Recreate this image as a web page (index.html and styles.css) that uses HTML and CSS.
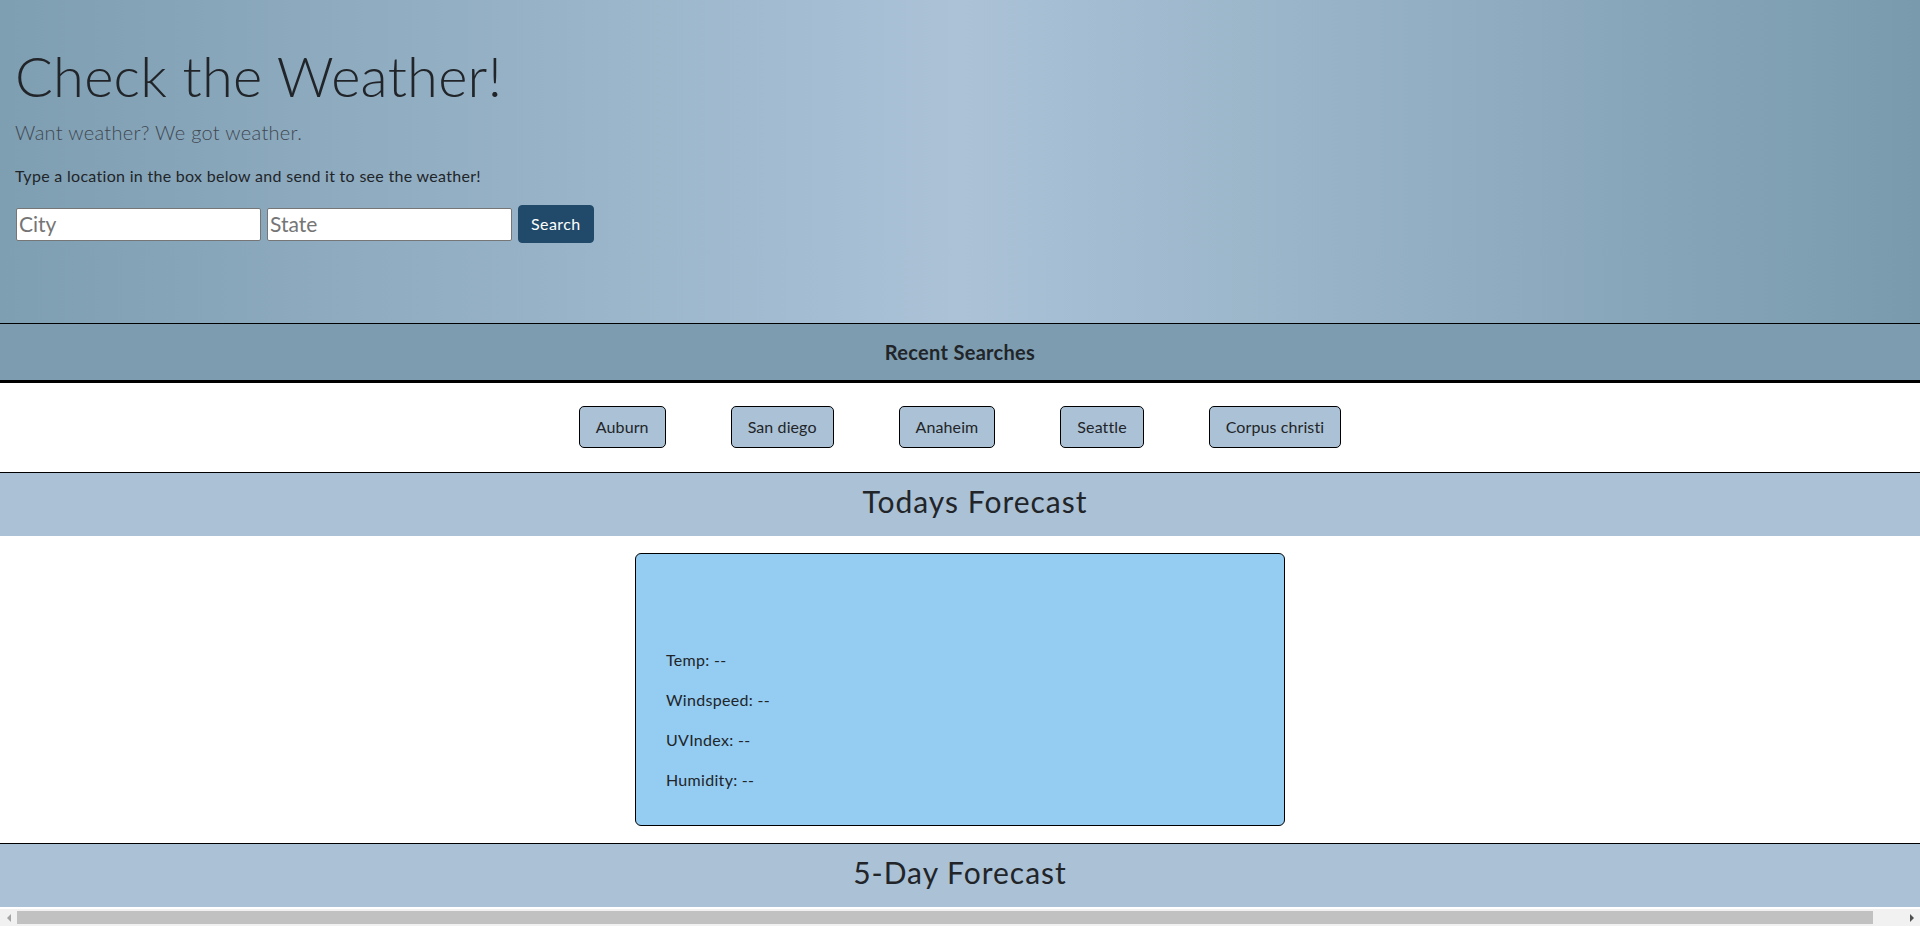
FILE: index.html
```html
<!DOCTYPE html>
<html lang="en">
<head>
<meta charset="utf-8">
<title>Check the Weather!</title>
<link rel="stylesheet" href="styles.css">
</head>
<body>
<header class="hero">
  <h1 class="hero-title">Check the Weather!</h1>
  <p class="hero-lead">Want weather? We got weather.</p>
  <p class="hero-text">Type a location in the box below and send it to see the weather!</p>
  <form class="search-form">
    <input class="search-input" type="text" placeholder="City">
    <input class="search-input" type="text" placeholder="State">
    <button class="search-btn" type="button">Search</button>
  </form>
</header>
<section class="recent">
  <h5 class="recent-title">Recent Searches</h5>
  <div class="recent-list">
    <button class="recent-btn" type="button">Auburn</button>
    <button class="recent-btn" type="button">San diego</button>
    <button class="recent-btn" type="button">Anaheim</button>
    <button class="recent-btn" type="button">Seattle</button>
    <button class="recent-btn" type="button">Corpus christi</button>
  </div>
</section>
<section class="today">
  <h3 class="section-bar section-bar-wide">Todays Forecast</h3>
  <div class="today-body">
    <div class="today-card">
      <p class="stat">Temp: --</p>
      <p class="stat">Windspeed: --</p>
      <p class="stat">UVIndex: --</p>
      <p class="stat">Humidity: --</p>
    </div>
  </div>
</section>
<section class="five">
  <h3 class="section-bar">5-Day Forecast</h3>
</section>
<div class="hscroll" aria-hidden="true">
  <span class="hscroll-arrow hscroll-left"></span>
  <span class="hscroll-track"><span class="hscroll-thumb"></span></span>
  <span class="hscroll-arrow hscroll-right"></span>
</div>
</body>
</html>
```
FILE: styles.css
```css
html, body {
  margin: 0;
  padding: 0;
}
body {
  font-family: "Lato", "Liberation Sans", sans-serif;
  font-size: 16px;
  line-height: 1.5;
  letter-spacing: 0.3px;
  color: #212529;
  background: #ffffff;
}
.hero {
  background: linear-gradient(to right, #7e9eb2 0%, #abc2d7 50%, #799aad 100%);
  padding: 42px 15px 0;
  height: 323px;
  box-sizing: border-box;
}
.hero-title {
  margin: 0 0 8px;
  font-size: 56px;
  font-weight: 300;
  line-height: 1.2;
  letter-spacing: 0.25px;
}
.hero-lead {
  margin: 0 0 17px;
  font-size: 20px;
  font-weight: 300;
  line-height: 1.5;
  color: #3f4852;
}
.hero-text {
  margin: 0;
  font-size: 16px;
}
.search-form {
  display: flex;
  align-items: center;
  gap: 6px;
  margin: 17px 0 0 1px;
}
.search-input {
  width: 245px;
  height: 33px;
  box-sizing: border-box;
  border: 1px solid #767676;
  border-radius: 2px;
  padding: 0 2px 1px;
  font-family: inherit;
  font-size: 21px;
  background: #fff;
  color: #212529;
}
.search-input::placeholder {
  color: #757575;
}
.search-btn {
  height: 38px;
  padding: 6px 12px;
  border: 1px solid #214a6a;
  border-radius: 4px;
  background: #214a6a;
  color: #ffffff;
  font-family: inherit;
  font-size: 16px;
  line-height: 1.5;
  letter-spacing: 0.4px;
}
.recent-title {
  margin: 0;
  background: #7d9caf;
  border-top: 1px solid #000;
  border-bottom: 3px solid #000;
  padding: 16px 0;
  font-size: 20px;
  font-weight: 700;
  line-height: 1.2;
  text-align: center;
}
.recent-list {
  display: flex;
  justify-content: center;
  gap: 65px;
  padding: 23px 0 24px;
}
.recent-btn {
  background: #abc1d5;
  border: 1px solid #000;
  border-radius: 5px;
  padding: 8px 16px;
  font-family: inherit;
  font-size: 16px;
  line-height: 24px;
  letter-spacing: 0.1px;
  color: #212529;
}
.section-bar {
  margin: 0;
  background: #abc1d5;
  border-top: 1px solid #000;
  padding: 10px 0 17px;
  font-size: 30px;
  font-weight: 400;
  line-height: 1.2;
  letter-spacing: 1px;
  text-align: center;
}
.section-bar-wide {
  margin-right: -30px;
}
.today-body {
  display: flex;
  justify-content: center;
  padding: 17px 0;
}
.today-card {
  width: 650px;
  box-sizing: border-box;
  background: #94ccf2;
  border: 1px solid #000;
  border-radius: 6px;
  padding: 94px 30px 17px;
}
.stat {
  margin: 0 0 16px;
  font-size: 16px;
  line-height: 24px;
}
.hscroll {
  position: fixed;
  left: 0;
  right: 0;
  bottom: 0;
  height: 17px;
  display: flex;
  align-items: stretch;
  background: #f1f1f1;
}
.hscroll-arrow {
  width: 17px;
  flex: none;
  display: flex;
  align-items: center;
  justify-content: center;
}
.hscroll-arrow::before {
  content: "";
  width: 0;
  height: 0;
  border-top: 4px solid transparent;
  border-bottom: 4px solid transparent;
}
.hscroll-left::before {
  border-right: 4px solid #a3a3a3;
}
.hscroll-right::before {
  border-left: 4px solid #505050;
}
.hscroll-track {
  flex: 1;
  display: flex;
  align-items: center;
}
.hscroll-thumb {
  width: 1856px;
  height: 13px;
  background: #c1c1c1;
}
```
